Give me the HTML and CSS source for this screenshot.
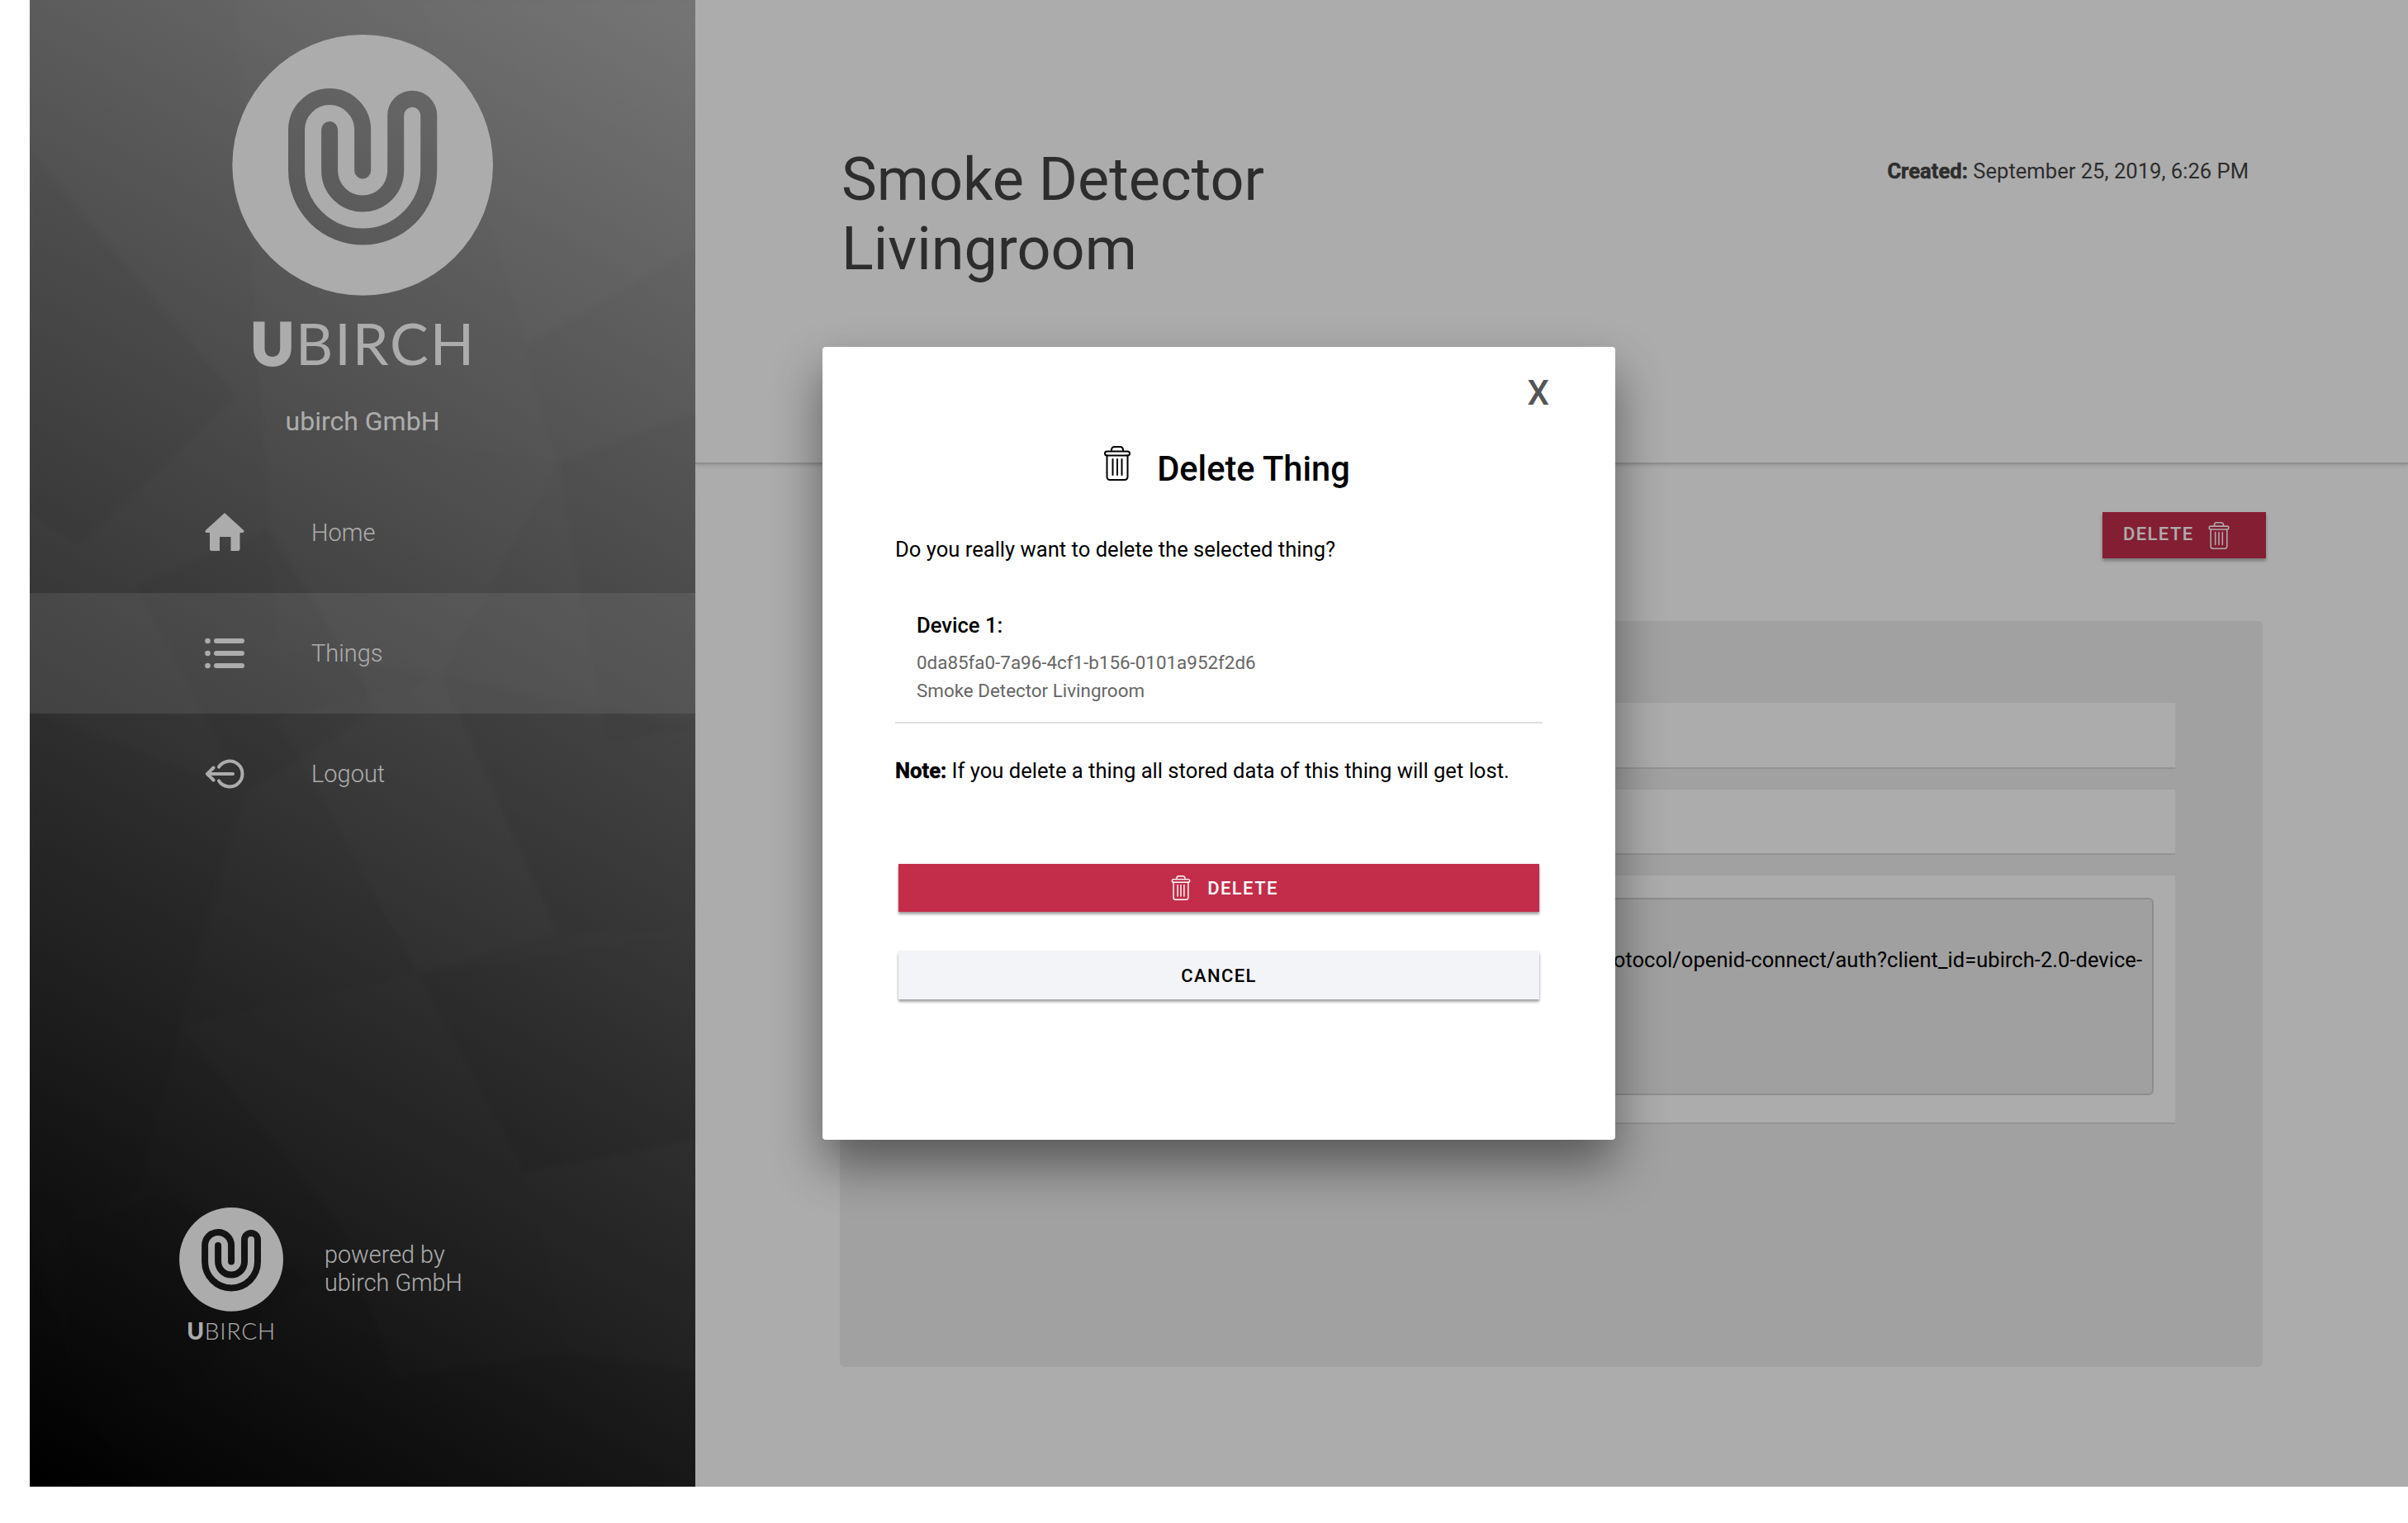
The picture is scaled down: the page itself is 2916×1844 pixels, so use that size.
FILE: index.html
```html
<!DOCTYPE html>
<html lang="en">
<head>
  <meta charset="UTF-8">
  <title>Delete Thing</title>
  <link rel="stylesheet" href="styles.css">
</head>
<body>
  <svg class="icon-defs" aria-hidden="true">
    <mask id="u-mask" maskUnits="userSpaceOnUse" x="0" y="0" width="1020" height="1020">
      <rect width="1020" height="1020" fill="#fff"/>
      <path d="M507 530V382A120 120 0 0 0 267 382V530A240 240 0 0 0 747 530V330A60 60 0 0 0 627 330V530A120 120 0 0 1 387 530V382" fill="none" stroke="#000" stroke-width="60" stroke-linecap="round"/>
    </mask>
    <symbol id="ubirch-logo" viewBox="33 37 947 947">
      <circle cx="507" cy="510" r="473" fill="#fff" mask="url(#u-mask)"/>
    </symbol>
    <symbol id="trash" viewBox="0 0 32 42">
      <g fill="none" stroke="currentColor" stroke-width="2" stroke-linecap="round" stroke-linejoin="round">
        <path d="M9 6V4.500A3.500 3.500 0 0 1 12.500 1H19.500A3.500 3.500 0 0 1 23 4.500V6"/>
        <rect x="1" y="6.500" width="30" height="5" rx="2.500"/>
        <path d="M3.500 11.500V37.500A3.500 3.500 0 0 0 7 41H25A3.500 3.500 0 0 0 28.500 37.500V11.500"/>
        <path d="M10.500 16V35M16 16V35M21.500 16V35"/>
      </g>
    </symbol>
  </svg>

  <div class="screen">
    <aside class="sidebar">
      <svg class="facets" viewBox="0 0 806 1800" preserveAspectRatio="none" aria-hidden="true">
        <polygon points="250,0 470,0 640,560 280,500" fill="#fff" opacity=".04"/>
        <polygon points="470,0 806,0 806,300 600,420" fill="#fff" opacity=".05"/>
        <polygon points="0,180 250,480 60,660 0,620" fill="#000" opacity=".06"/>
        <polygon points="280,500 640,560 500,820 300,790" fill="#fff" opacity=".03"/>
        <polygon points="640,560 806,500 806,880 700,900" fill="#000" opacity=".05"/>
        <polygon points="130,710 290,640 420,860 260,960" fill="#000" opacity=".07"/>
        <polygon points="300,870 500,820 640,1130 470,1180" fill="#fff" opacity=".03"/>
        <polygon points="0,860 260,960 180,1240 0,1160" fill="#000" opacity=".06"/>
        <polygon points="500,820 806,880 806,1130 640,1130" fill="#000" opacity=".05"/>
        <polygon points="180,1240 470,1180 600,1420 380,1490" fill="#fff" opacity=".025"/>
        <polygon points="470,1180 806,1130 806,1380 600,1420" fill="#000" opacity=".04"/>
        <polygon points="0,1160 180,1240 130,1440 0,1500" fill="#000" opacity=".07"/>
        <polygon points="40,1480 170,1450 340,1550 200,1660 60,1700" fill="#000" opacity=".08"/>
        <polygon points="380,1490 600,1420 650,1640 440,1670" fill="#fff" opacity=".025"/>
        <polygon points="600,1420 806,1380 806,1660 650,1640" fill="#fff" opacity=".03"/>
        <polygon points="0,1500 60,1700 120,1800 0,1800" fill="#000" opacity=".1"/>
      </svg>

      <div class="brand">
        <svg class="brand-logo"><use href="#ubirch-logo"/></svg>
        <div class="wordmark"><b>U</b>BIRCH</div>
        <div class="org-name">ubirch GmbH</div>
      </div>

      <nav class="nav">
        <a class="nav-item" href="#">
          <svg class="nav-icon" viewBox="0 0 48 48"><path transform="translate(0 -1.500)" d="M24 1.500 47 22.500C48 24 47 25.500 45.500 25.500H42.500V45A2.500 2.500 0 0 1 40 47.500H31.500V30.500H18V47.500H8.500A2.500 2.500 0 0 1 6 45V25.500H2.500C1 25.500 0 24 1 22.500Z" fill="currentColor"/></svg>
          <span>Home</span>
        </a>
        <a class="nav-item active" href="#">
          <svg class="nav-icon" viewBox="0 0 48 48"><g fill="currentColor"><circle cx="3.500" cy="9" r="3.300"/><circle cx="3.500" cy="24" r="3.300"/><circle cx="3.500" cy="39" r="3.300"/><rect x="11" y="6" width="37" height="6" rx="3"/><rect x="11" y="21" width="37" height="6" rx="3"/><rect x="11" y="36" width="37" height="6" rx="3"/></g></svg>
          <span>Things</span>
        </a>
        <a class="nav-item" href="#">
          <svg class="nav-icon" viewBox="0 0 48 48"><g fill="none" stroke="currentColor" stroke-width="4" stroke-linecap="round" stroke-linejoin="round"><path d="M17 15.600A15.500 15.500 0 1 1 17 32.400"/><path d="M3 24H34M10.500 16.500 3 24 10.500 31.500"/></g></svg>
          <span>Logout</span>
        </a>
      </nav>

      <div class="powered">
        <div class="powered-logo">
          <svg class="small-logo"><use href="#ubirch-logo"/></svg>
          <div class="small-wordmark"><b>U</b>BIRCH</div>
        </div>
        <div class="powered-text">powered by<br>ubirch GmbH</div>
      </div>
    </aside>

    <main class="content">
      <header class="page-head">
        <h1 class="page-title">Smoke Detector Livingroom</h1>
        <div class="created"><b>Created:</b> September 25, 2019, 6:26 PM</div>
      </header>

      <div class="page-body">
        <div class="actions">
          <button class="btn-delete-top"><span class="top-label">DELETE</span> <svg class="trash-top"><use href="#trash"/></svg></button>
        </div>
        <section class="card">
          <div class="row row-short"></div>
          <div class="row row-short"></div>
          <div class="row row-tall">
            <div class="url-box"><span>protocol/openid-connect/auth?client_id=ubirch-2.0-device-</span></div>
          </div>
        </section>
      </div>
    </main>

    <div class="overlay">
      <div class="modal">
        <div class="modal-close">X</div>
        <div class="modal-title">
          <svg class="trash-title"><use href="#trash"/></svg>
          <h2>Delete Thing</h2>
        </div>
        <p class="question">Do you really want to delete the selected thing?</p>
        <div class="device">
          <div class="device-label">Device 1:</div>
          <div class="device-line">0da85fa0-7a96-4cf1-b156-0101a952f2d6</div>
          <div class="device-line">Smoke Detector Livingroom</div>
        </div>
        <p class="note"><b>Note:</b> If you delete a thing all stored data of this thing will get lost.</p>
        <button class="btn btn-danger"><svg class="trash-btn"><use href="#trash"/></svg>DELETE</button>
        <button class="btn btn-cancel">CANCEL</button>
      </div>
    </div>
  </div>
</body>
</html>
```

FILE: styles.css
```css
* { box-sizing: border-box; }
html, body { margin: 0; height: 100%; }
body { background-color: #fff; font-family: Roboto, "Liberation Sans", sans-serif; color: #000; overflow: hidden; }
button { font-family: inherit; border: none; cursor: pointer; }
.icon-defs { position: absolute; width: 0; height: 0; }

.screen { position: relative; display: flex; height: 1800px; margin-left: 36px; overflow: hidden; background-color: #fff; }

/* sidebar */
.sidebar { position: relative; flex: 0 0 806px; display: flex; flex-direction: column; color: #fff; background: linear-gradient(210deg, #acacac 0%, #000 100%); padding-top: 42px; }
.facets { position: absolute; top: 0; left: 0; width: 100%; height: 100%; opacity: 0.6; filter: blur(3px); }
.brand, .nav, .powered { position: relative; }
.brand { display: flex; flex-direction: column; align-items: center; }
.brand-logo { width: 316px; height: 316px; }
.wordmark { margin-top: 22px; padding-left: 2px; font-family: Lato, sans-serif; font-weight: 400; font-size: 70px; line-height: 70px; letter-spacing: 2px; }
.wordmark b { font-weight: 900; -webkit-text-stroke: 3px #fff; }
.org-name { margin-top: 42px; font-size: 32px; line-height: 36px; }

.nav { margin-top: 44px; }
.nav-item { display: flex; align-items: center; gap: 81px; height: 146px; padding-left: 212px; color: #fff; text-decoration: none; font-size: 29px; line-height: 36px; font-weight: 300; }
.nav-item.active { background-color: rgba(255,255,255,0.15); }
.nav-icon { width: 48px; height: 48px; }

.powered { display: flex; gap: 50px; margin-top: 452px; padding-left: 181px; }
.powered-logo { display: flex; flex-direction: column; align-items: center; }
.small-logo { width: 126px; height: 126px; }
.small-wordmark { margin-top: 9px; font-family: Lato, sans-serif; font-weight: 300; font-size: 28px; line-height: 28px; letter-spacing: 0.8px; }
.small-wordmark b { font-weight: 900; }
.powered-text { margin-top: 40px; font-size: 28.8px; line-height: 34px; font-weight: 300; }

/* page behind the dialog */
.content { flex: 1; background-color: #fff; }
.page-head { display: flex; justify-content: space-between; height: 562px; padding: 176px 193px 0 177px; border-bottom: 2px solid #d4d4d4; box-shadow: 0 2px 4px rgba(0,0,0,0.12); }
.page-title { margin: 0; max-width: 600px; font-size: 72px; line-height: 84px; font-weight: 400; color: #444; }
.created { margin-top: 16px; font-size: 25.6px; color: #444; }
.created b { -webkit-text-stroke: 0.5px #444; }
.page-body { padding: 58px 176px 0 175px; }
.actions { display: flex; justify-content: flex-end; margin-right: -4px; }
.btn-delete-top { display: flex; align-items: center; gap: 17px; width: 198px; height: 56px; padding: 0 0 0 25px; background-color: #c42d4a; color: #fff; font-size: 22px; font-weight: 500; letter-spacing: 1.4px; box-shadow: 0 3px 4px rgba(0,0,0,0.3); }
.top-label { margin-bottom: 4px; }
.trash-top { width: 26px; height: 33px; }
.card { margin-top: 76px; height: 903px; padding: 99px 106px; background-color: #efefef; border-radius: 6px; }
.row { background-color: #fff; border-bottom: 2px solid #dcdcdc; margin-bottom: 25px; }
.row-short { height: 79.5px; }
.row-tall { height: 301px; padding: 27px 26px 35px; }
.url-box { display: flex; justify-content: flex-end; height: 239px; padding: 57px 12px 0 0; overflow: hidden; background-color: #eee; border: 2px solid #d2d2d2; border-radius: 6px; font-size: 25.6px; line-height: 32px; white-space: nowrap; }

/* dialog */
.overlay { position: absolute; top: 0; left: 0; right: 0; bottom: 0; display: flex; align-items: center; justify-content: center; background-color: rgba(0,0,0,0.325); }
.modal { width: 960px; height: 960px; padding: 35px 88px 0; background-color: #fff; border-radius: 4px; box-shadow: 0 30px 60px rgba(0,0,0,0.45); }
.modal-close { margin-right: -8px; text-align: right; font-size: 42px; line-height: 42px; font-weight: 500; color: #555; }
.modal-title { display: flex; justify-content: center; gap: 32px; height: 51px; margin-top: 43px; padding-left: 20px; }
.trash-title { width: 32px; height: 42px; }
.modal-title h2 { margin: 4px 0 0; font-size: 41.6px; line-height: 48px; font-weight: 500; }
.question { margin: 57px 0 0; font-size: 25.6px; line-height: 34px; }
.device { margin-top: 58px; padding: 0 0 21px 26px; border-bottom: 2px solid #e0e0e0; font-size: 25.6px; line-height: 34px; }
.device-label { font-weight: 500; margin-bottom: 11px; }
.device-line { font-size: 22.4px; color: #666; }
.note { margin: 40px 0 0; font-size: 25.6px; line-height: 34px; }
.note b { -webkit-text-stroke: 0.5px #000; }
.btn { display: flex; align-items: center; justify-content: center; width: 776px; height: 58px; margin: 0 4px; font-size: 22px; font-weight: 500; letter-spacing: 1.4px; box-shadow: 0 3px 3px rgba(0,0,0,0.35), 0 0 3px rgba(0,0,0,0.1); }
.btn-danger { margin-top: 96px; padding-left: 20px; gap: 20px; background-color: #c32d4a; color: #fff; }
.btn-cancel { margin-top: 48px; background-color: #f3f4f8; color: #000; }
.trash-btn { width: 24px; height: 30px; }
```
